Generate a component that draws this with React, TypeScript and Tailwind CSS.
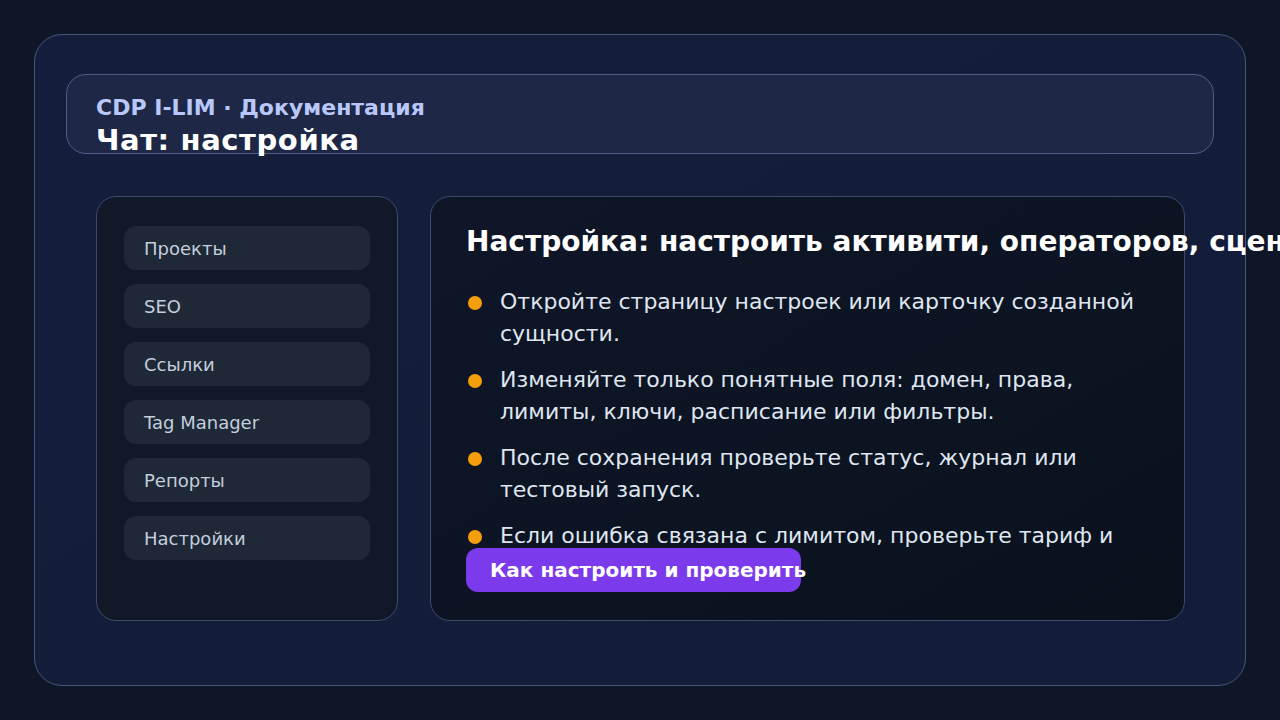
const nav = ['Проекты', 'SEO', 'Ссылки', 'Tag Manager', 'Репорты', 'Настройки'];

const steps = [
  'Откройте страницу настроек или карточку созданной сущности.',
  'Изменяйте только понятные поля: домен, права, лимиты, ключи, расписание или фильтры.',
  'После сохранения проверьте статус, журнал или тестовый запуск.',
  'Если ошибка связана с лимитом, проверьте тариф и квоты в разделе настроек.',
];

export default function App() {
  return (
    <div className="h-[720px] w-[1280px] overflow-hidden bg-[#0e1628] p-[34px] font-['DejaVu_Sans',sans-serif]">
      <div className="flex h-[652px] flex-col rounded-[28px] border border-[#46557a] bg-gradient-to-br from-[#141e3c] to-[#131c38] px-[31px] pt-[39px]">
        <div className="h-20 shrink-0 rounded-[20px] border border-[#4f5f86] bg-[#1e2846] px-[29px] pt-[19px]">
          <div className="text-[22px] font-bold leading-[28px] text-[#b9c8fb]">CDP I-LIM · Документация</div>
          <div className="whitespace-nowrap text-[29px] font-bold leading-[36px] tracking-[0.6px] text-white">Чат: настройка</div>
        </div>

        <div className="mt-[42px] flex gap-8 px-[30px]">
          <div className="h-[425px] w-[302px] shrink-0 rounded-[20px] border border-[#3c4a6c] bg-[#111827] px-[27px] pt-[29px]">
            <div className="flex flex-col gap-[14px]">
              {nav.map((n) => (
                <div key={n} className="flex h-11 items-center rounded-xl bg-[#1e2837] pl-5 text-[18px] text-[#c4cedd]">
                  {n}
                </div>
              ))}
            </div>
          </div>

          <div className="h-[425px] w-[755px] shrink-0 rounded-[20px] border border-[#3c4a6c] bg-gradient-to-br from-[#0f1628] to-[#0a111d] px-[35px] pt-[28px]">
            <h2 className="whitespace-nowrap text-[28px] font-bold leading-[34px] text-white">
              Настройка: настроить активити, операторов, сценарии и интеграции
            </h2>
            <div className="mt-[27px] h-[262px] overflow-hidden">
              <ul className="flex flex-col gap-[14px]">
                {steps.map((s) => (
                  <li key={s} className="flex gap-[18px] pl-[2px] text-[22px] leading-8 text-[#dfe6f0]">
                    <span className="mt-[10px] h-[14px] w-[14px] shrink-0 rounded-full bg-[#f59e0b]" />
                    <span className="flex-1">{s}</span>
                  </li>
                ))}
              </ul>
            </div>
            <div className="flex h-11 w-[335px] items-center whitespace-nowrap rounded-xl bg-[#7c3aed] px-6 text-[20px] font-bold text-white">
              Как настроить и проверить
            </div>
          </div>
        </div>
      </div>
    </div>
  );
}
